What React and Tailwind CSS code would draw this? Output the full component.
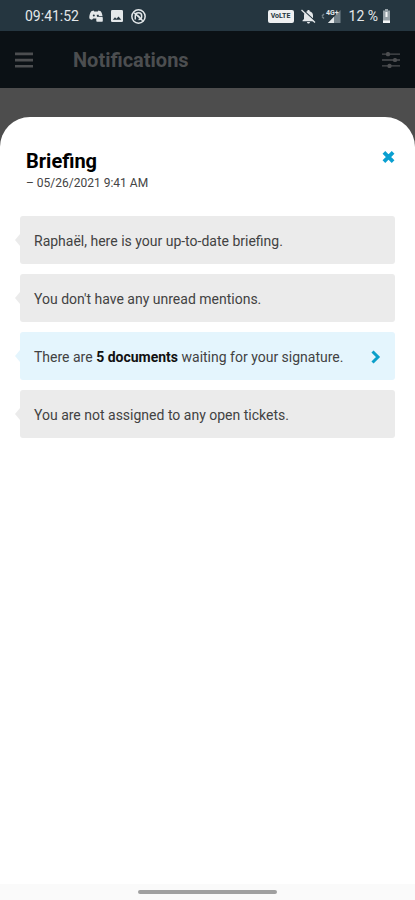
const messages = [
  { id: 1, text: "Raphaël, here is your up-to-date briefing." },
  { id: 2, text: "You don't have any unread mentions." },
  {
    id: 3,
    text: (
      <>
        There are <b className="font-bold text-[#111]">5 documents</b> waiting for your signature.
      </>
    ),
    link: true,
  },
  { id: 4, text: "You are not assigned to any open tickets." },
];

function StatusBar() {
  return (
    <div className="flex h-[31px] items-center justify-between bg-[#253640] pt-px pr-6 pl-[25px] text-sm text-[#e4e8ea]">
      <div className="flex items-center gap-2">
        <span className="mr-0.5">09:41:52</span>
        <svg width="14" height="12" viewBox="0 0 14 12" fill="currentColor">
          <path d="M2.3 1.300 4.600.6l.6.9h3.600l.6-.9 2.300.7c1 1.400 1.600 3 1.800 5H8V8.500H4.200L3 9.800C1.800 9.500.8 9 .3 8.300.2 5.500.9 3.200 2.300 1.300Z" />
          <circle cx="4.800" cy="5.600" r="1" fill="#253640" />
          <path d="M7.800 4.800h2v1.400h-2z" fill="#253640" />
          <rect x="7.300" y="7" width="6.500" height="4.800" rx="0.800" />
        </svg>
        <svg width="12" height="12" viewBox="0 0 12 12">
          <rect width="12" height="12" rx="1.300" fill="currentColor" />
          <path d="m1.800 9.800 2.200-2.600 1.500 1.500 2-2.200 2.800 3.300Z" fill="#253640" />
        </svg>
        <svg width="15" height="15" viewBox="0 0 14 14" fill="none" stroke="currentColor">
          <circle cx="7" cy="7" r="6.200" strokeWidth="1.400" />
          <path d="M4 9.800V6.500C4 4.700 5.200 3.500 7 3.500S10 4.700 10 6.500 8.800 9.800 7 9.800" strokeWidth="1.400" />
          <path d="m3 3.500 8 7.500M5.800 5.700l3 2.800" strokeWidth="1.400" />
        </svg>
      </div>
      <div className="flex items-center">
        <span className="flex h-[13px] w-[26px] items-center justify-center rounded-xs bg-[#eef0f1] text-[7px] font-bold text-[#253640]">
          VoLTE
        </span>
        <svg className="ml-[7px]" width="15" height="15" viewBox="0 0 15 15">
          <path
            d="M7.500 1c.8 0 1.200.5 1.200 1.200C10.800 2.800 12 4.500 12 6.500V10l1.500 1.500v.7h-12v-.7L3 10V6.500c0-2 1.200-3.700 3.300-4.300C6.300 1.500 6.700 1 7.500 1ZM6 13h3c0 .9-.6 1.500-1.500 1.500S6 13.900 6 13Z"
            fill="currentColor"
          />
          <path d="m1.500.5 13 12" stroke="#253640" strokeWidth="1.300" />
          <path d="m.5 1 13.500 12.500" stroke="currentColor" strokeWidth="1.300" />
        </svg>
        <svg className="ml-[5px]" width="20" height="15" viewBox="0 0 20 15">
          <path d="M19.500 1v13H7Z" fill="#74828a" />
          <path d="M13 7.800V14H7Z" fill="currentColor" />
          <path d="m1 7 2-2M1 7.500l2 2" stroke="#74828a" strokeWidth="1.500" />
          <text x="5" y="6" fontSize="7" fontWeight="700" fill="currentColor">
            4G+
          </text>
        </svg>
        <span className="ml-2">12 %</span>
        <svg className="ml-1" width="9" height="14" viewBox="0 0 9 14">
          <path d="M3 0h3v1.500h2V14H1V1.500h2Z" fill="#98a3a9" />
          <path d="M1 11.500h7V14H1ZM3.500 3h2v5h-2Z" fill="#f3f5f6" />
        </svg>
      </div>
    </div>
  );
}

function Header() {
  return (
    <header className="flex h-[57px] items-center bg-[#0b1115] px-[15px] pt-px text-[#4c4e50]">
      <button type="button" aria-label="Open menu">
        <svg width="18" height="16" viewBox="0 0 18 16" fill="currentColor">
          <path d="M0 .5h18v2.700H0ZM0 6.700h18v2.700H0ZM0 12.900h18v2.700H0Z" />
        </svg>
      </button>
      <h1 className="ml-10 text-xl font-bold">Notifications</h1>
      <button type="button" aria-label="Filter notifications" className="ml-auto">
        <svg width="18" height="18" viewBox="0 0 18 18" fill="currentColor">
          <path d="M0 2.400h18v1.400H0ZM0 8.300h18v1.400H0ZM0 14.200h18v1.400H0Z" />
          <rect x="4" y="1" width="4" height="4.200" rx="1.500" />
          <rect x="11" y="6.900" width="4" height="4.200" rx="1.500" />
          <rect x="5.500" y="12.800" width="4" height="4.200" rx="1.500" />
        </svg>
      </button>
    </header>
  );
}

function Bubble({ children, link }) {
  const box = "flex h-12 w-full items-center rounded-[3px] px-3.5 pt-px text-left text-sm text-[#424242]";

  return (
    <li className="relative">
      <svg
        className={"absolute top-[18px] right-full " + (link ? "text-[#e4f5fd]" : "text-[#ebebeb]")}
        width="5"
        height="12"
        viewBox="0 0 5 12"
        fill="currentColor"
      >
        <path d="M5 0v12L0 6Z" />
      </svg>
      {link ? (
        <button type="button" className={box + " justify-between bg-[#e4f5fd]"}>
          <span>{children}</span>
          <svg width="10" height="14" viewBox="0 0 10 14" fill="none" stroke="#0a9fc9" strokeWidth="3">
            <path d="m1.500 1.500 5.500 5.500-5.500 5.500" />
          </svg>
        </button>
      ) : (
        <p className={box + " bg-[#ebebeb]"}>{children}</p>
      )}
    </li>
  );
}

function App() {
  return (
    <div className="flex min-h-screen flex-col bg-[#4d4d4d] font-['Roboto',sans-serif]">
      <StatusBar />
      <Header />
      <main className="mt-[29px] flex grow flex-col rounded-t-[30px] bg-white">
        <div className="flex items-start justify-between pt-8 pr-5 pl-[26px]">
          <div>
            <h2 className="text-xl leading-6 font-bold text-black">Briefing</h2>
            <p className="text-xs leading-5 text-[#444]">– 05/26/2021 9:41 AM</p>
          </div>
          <button type="button" aria-label="Close" className="pt-0.5">
            <svg width="13" height="12" viewBox="0 0 12 12" fill="none" stroke="#0a9fd0" strokeWidth="3.800">
              <path d="m1.400 1.400 9.200 9.200M10.600 1.400l-9.200 9.200" />
            </svg>
          </button>
        </div>
        <ul className="mt-[23px] flex flex-col gap-2.5 px-5">
          {messages.map((message) => (
            <Bubble key={message.id} link={message.link}>
              {message.text}
            </Bubble>
          ))}
        </ul>
        <div className="mt-auto flex h-4 items-center justify-center bg-[#fafafa]">
          <div className="h-1 w-1/3 rounded-full bg-[#a0a0a0]" />
        </div>
      </main>
    </div>
  );
}

export default App;
